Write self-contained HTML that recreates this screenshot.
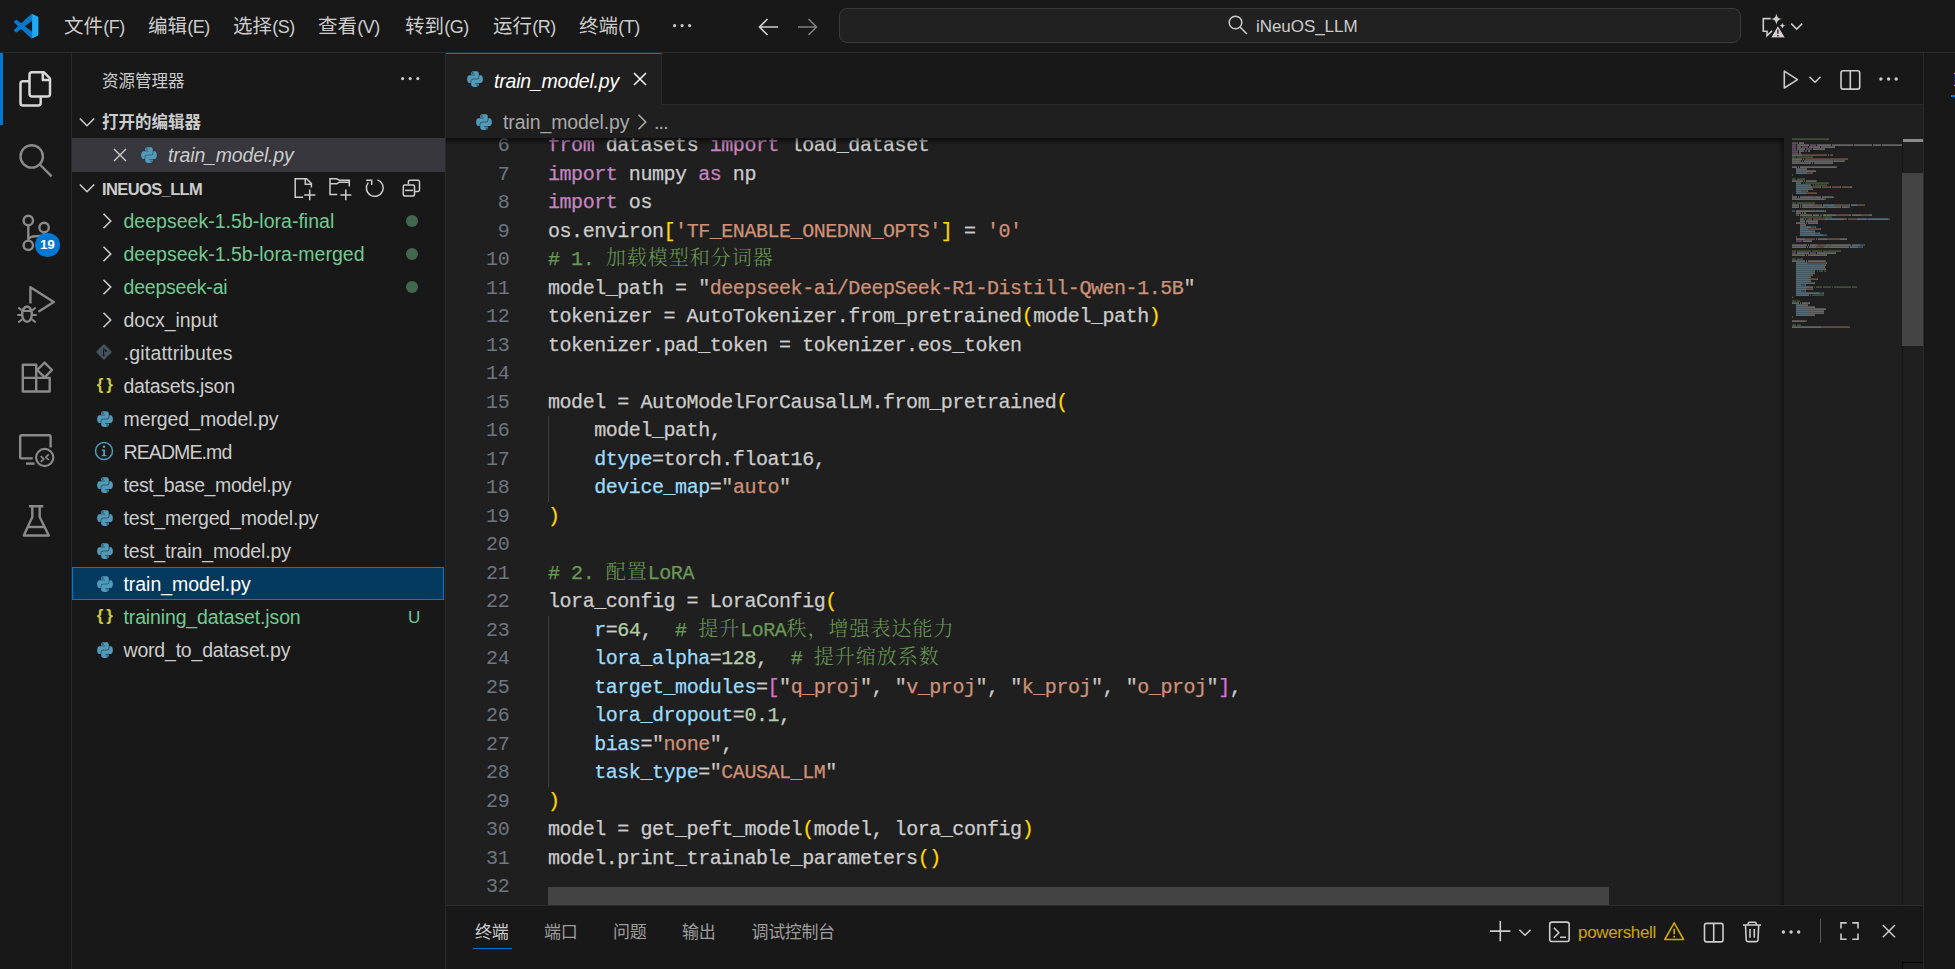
<!DOCTYPE html>
<html lang="zh-CN">
<head>
<meta charset="utf-8">
<title>train_model.py - iNeuOS_LLM - Visual Studio Code</title>
<style>
*{box-sizing:border-box;margin:0;padding:0}
html,body{width:1955px;height:969px;overflow:hidden;background:#181818}
body{position:relative;font-family:"Liberation Sans","Noto Sans CJK SC",sans-serif;font-size:19.5px;color:#cccccc}
.abs{position:absolute}
svg{display:block;overflow:visible}
/* ---------- title bar ---------- */
#titlebar{left:0;top:0;width:1955px;height:53px;background:#181818;border-bottom:1px solid #2b2b2b}
.menu{position:absolute;top:0;height:52px;line-height:53px;font-size:19.5px;color:#cccccc;white-space:nowrap}
.ml{font-size:18px;letter-spacing:-.55px;margin-left:.3px}
#cmd{left:839px;top:8px;width:902px;height:35px;border:1px solid #3a3a3a;border-radius:8px;background:#212121}
/* ---------- activity bar ---------- */
#activity{left:0;top:53px;width:72px;height:916px;background:#181818;border-right:1px solid #2b2b2b}
/* ---------- side bar ---------- */
#sidebar{left:72px;top:53px;width:374px;height:916px;background:#181818;border-right:1px solid #2b2b2b}
.row{position:absolute;left:0;width:373px;height:33px;line-height:32px;white-space:nowrap;font-size:19.5px;color:#cccccc}
.row .lbl{position:absolute;top:0}
.g{color:#73c991}
/* ---------- editor ---------- */
#tabs{left:446px;top:53px;width:1477px;height:52px;background:#181818;border-bottom:1px solid #2b2b2b}
#tab{left:0;top:0;width:216px;height:52px;background:#1f1f1f;border-top:1px solid #0078d4;border-right:1px solid #2b2b2b}
#crumbs{left:446px;top:105px;width:1477px;height:33px;background:#1f1f1f}
#editor{left:446px;top:138px;width:1477px;height:767px;background:#1f1f1f;overflow:hidden}
.ln{position:absolute;left:0;width:63.2px;text-align:right;height:28.5px;line-height:28.5px;color:#6e7681;font-family:"Liberation Mono",monospace;font-size:20px;letter-spacing:-0.45px;white-space:pre}
.cl{position:absolute;left:102px;height:28.5px;line-height:28.5px;color:#cccccc;font-family:"Liberation Mono","Noto Serif CJK SC",monospace;font-size:20px;letter-spacing:-0.45px;white-space:pre;-webkit-text-stroke:.25px}
.q{color:#cdc3bd}.k{color:#c586c0}.s{color:#ce9178}.c{color:#6a9955}.v{color:#9cdcfe}.n{color:#b5cea8}.b1{color:#ffd700}.b2{color:#da70d6}
.cj{letter-spacing:1px;font-size:20px;font-weight:300;-webkit-text-stroke:0}
/* ---------- panel ---------- */
#panel{left:446px;top:905px;width:1477px;height:64px;background:#181818;border-top:1px solid #2b2b2b}
.ptab{position:absolute;top:0;height:52px;line-height:54px;font-size:17px;letter-spacing:-.35px;color:#9d9d9d;white-space:nowrap}
/* ---------- aux bar ---------- */
#aux{left:1923px;top:53px;width:32px;height:916px;background:#181818;border-left:1px solid #2b2b2b}

</style>
</head>
<body>
<div id="titlebar" class="abs">
<svg class="abs" style="left:14px;top:14px" width="24.3" height="24.3" viewBox="0 0 100 100">
<path d="M96.5 10.8L75.9.9a6.2 6.2 0 0 0-7.1 1.2L29.4 38 12.2 25a4.2 4.2 0 0 0-5.3.2L1.4 30.3a4.2 4.2 0 0 0 0 6.2L16.3 50 1.4 63.6a4.2 4.2 0 0 0 0 6.2l5.5 5a4.2 4.2 0 0 0 5.3.200L29.4 62l39.4 36a6.2 6.2 0 0 0 7.1 1.2l20.6-9.9a6.2 6.2 0 0 0 3.5-5.6V16.4a6.2 6.2 0 0 0-3.5-5.6zM75 72.7L45.1 50 75 27.3z" fill="#0877cb"/>
<path d="M75.9.9L96.5 10.8A6.2 6.2 0 0 1 100 16.4v67.3a6.2 6.2 0 0 1-3.5 5.6l-20.6 9.9a6.2 6.2 0 0 1-6.1-.4c2.3 1.4 5.2-.3 5.2-3V4.3c0-2.7-2.9-4.4-5.2-3a6.2 6.2 0 0 1 6.1-.4z" fill="#23a9f2"/>
</svg>
<div class="menu" style="left:64px">文件<span class="ml">(F)</span></div>
<div class="menu" style="left:148px">编辑<span class="ml">(E)</span></div>
<div class="menu" style="left:233px">选择<span class="ml">(S)</span></div>
<div class="menu" style="left:318px">查看<span class="ml">(V)</span></div>
<div class="menu" style="left:405px">转到<span class="ml">(G)</span></div>
<div class="menu" style="left:493px">运行<span class="ml">(R)</span></div>
<div class="menu" style="left:579px">终端<span class="ml">(T)</span></div>
<svg class="abs" style="left:672px;top:23.4px" width="20.2" height="5.2"><circle cx="2.6" cy="2.6" r="1.6" fill="#cccccc"/><circle cx="10.1" cy="2.6" r="1.6" fill="#cccccc"/><circle cx="17.6" cy="2.6" r="1.6" fill="#cccccc"/></svg>
<svg class="abs" style="left:757px;top:16px" width="64" height="22" viewBox="0 0 64 22" fill="none" stroke-width="1.6">
<path d="M10.5 3l-8 8 8 8M2.5 11h18.5" stroke="#cccccc"/><path d="M51.5 3l8 8-8 8M59.5 11h-18.5" stroke="#808080"/></svg>
<div id="cmd" class="abs"></div>
<svg class="abs" style="left:1227px;top:14px" width="22" height="22" viewBox="0 0 22 22" fill="none" stroke="#cccccc" stroke-width="1.5"><circle cx="8.5" cy="8.5" r="6.3"/><path d="M13 13l7 7"/></svg>
<div class="abs" style="left:1256px;top:0;height:52px;line-height:53px;font-size:17px;color:#cccccc;letter-spacing:-0.056px;white-space:nowrap">iNeuOS_LLM</div>
<svg class="abs" style="left:1750px;top:0" width="70" height="52" viewBox="1750 0 70 52" fill="none" stroke="#cccccc" stroke-width="1.6">
<path d="M1770.7 18.6H1763.3V31.2H1767V35.6L1772 30.8"/>
<path d="M1776.4 13.5c.7 3.9 1.8 5 5.8 5.6-4 .6-5.1 1.7-5.8 5.6-.7-3.9-1.8-5-5.8-5.6 4-.6 5.1-1.7 5.8-5.6z" fill="#cccccc" stroke="none"/>
<path d="M1782.4 22.6c.4 2.1 1 2.7 3.1 3.1-2.1.4-2.7 1-3.1 3.1-.4-2.1-1-2.7-3.1-3.1 2.1-.4 2.7-1 3.1-3.1z" fill="#cccccc" stroke="none"/>
<path d="M1777.9 25.4L1785.5 37.9H1770.5z" fill="#d0d0d0" stroke="#181818" stroke-width="1"/>
<path d="M1777.9 29.5v4.3M1777.9 35v1.5" stroke="#5a1d1d" stroke-width="1.5"/>
<path d="M1791.2 23.6l5.5 5.5 5.5-5.5" stroke-width="1.5"/></svg>
</div>
<div id="activity" class="abs">
<div class="abs" style="left:0;top:0;width:3px;height:72px;background:#0078d4"></div>
<svg class="abs" style="left:0;top:0" width="72" height="520" viewBox="0 0 72 520" fill="none" stroke-width="2.4" stroke-linejoin="round">
<g stroke="#d7d7d7" stroke-width="2.5"><path d="M32 19.3H44L50 25.5V41.1a2.5 2.5 0 0 1-2.5 2.5H32a2.5 2.5 0 0 1-2.5-2.5V21.8a2.5 2.5 0 0 1 2.5-2.5z"/><path d="M42.8 19.3V27H50"/><path d="M29.5 28.3H23a2.5 2.5 0 0 0-2.5 2.5V50a2.5 2.5 0 0 0 2.5 2.5H38.2a2.5 2.5 0 0 0 2.5-2.5V43.6"/></g>
<g stroke="#8a8a8a">
<circle cx="31.7" cy="103.4" r="11.2"/><path d="M39.8 111.5L51.6 123.3"/>
<circle cx="28.3" cy="167.5" r="4.7"/><circle cx="44.1" cy="174.5" r="4.7"/><circle cx="28.3" cy="192.3" r="4.7"/><path d="M28.3 172.2V187.6M44.1 179.2c0 3.8-3 4-8 4-5 0-7.8 1-7.8 4.4"/>
<path d="M30.4 250.6V234.2L53.8 249 38.4 258.8"/><ellipse cx="27" cy="261.2" rx="4.8" ry="7.7"/><path d="M22.3 258h9.4M17.3 262h4.3M32.4 262h4.3M18.3 254.5l3.6 3M35.7 254.5l-3.6 3M18.3 269.5l3.9-3.3M35.7 269.5l-3.9-3.3" stroke-width="2"/>
<path d="M22.8 311.7H36.2V324.9H49.7V338.5H22.8z"/><path d="M22.8 324.9H36.2V338.5"/><path d="M44.6 309.6L52 317 44.6 324.4 37.2 317z"/>
<path d="M32.8 405.4H21.7a1.5 1.5 0 0 1-1.5-1.5V383.8a1.5 1.5 0 0 1 1.5-1.5H49.1a1.5 1.5 0 0 1 1.5 1.5V394.6"/><path d="M26 410.6h8.6"/><circle cx="44.7" cy="404.5" r="8.6" stroke-width="2.2"/><path d="M40.7 403.2l3.1 2.8-3.1 2.8M48.8 401.4l-3 2.8 3 2.8" stroke-width="1.7"/>
<path d="M29 453.3H43.3M32.3 453.3V464L23.8 482.5H48.8L39.7 464V453.3"/><path d="M28 474H44.5"/>
</g></svg>
<div class="abs" style="left:35px;top:179.7px;width:24.6px;height:24.6px;border-radius:50%;background:#0078d4;color:#fff;font:bold 13.5px/24.6px 'Liberation Sans',sans-serif;text-align:center;letter-spacing:-.3px">19</div>
</div>
<div id="sidebar" class="abs">
<div class="abs" style="left:30px;top:0px;height:52px;line-height:56px;font-size:16.5px;color:#cccccc;white-space:nowrap">资源管理器</div>
<svg class="abs" style="left:327.7px;top:22.9px" width="20.4" height="5.2"><circle cx="2.6" cy="2.6" r="1.6" fill="#cccccc"/><circle cx="10.2" cy="2.6" r="1.6" fill="#cccccc"/><circle cx="17.8" cy="2.6" r="1.6" fill="#cccccc"/></svg>
<svg class="abs" style="left:7px;top:61px" width="16" height="16" viewBox="0 0 16 16"><path d="M.800 4.5l7.2 7.2 7.2-7.2" fill="none" stroke="#cccccc" stroke-width="1.6"/></svg>
<div class="abs" style="left:30px;top:52px;height:33px;line-height:35px;font-size:16.5px;font-weight:bold;color:#cccccc;white-space:nowrap">打开的编辑器</div>
<div class="abs" style="left:0;top:85px;width:373px;height:34px;background:#37373d"></div>
<svg class="abs" style="left:41px;top:95px" width="14" height="14" viewBox="0 0 14 14"><path d="M1 1l12 12M13 1L1 13" fill="none" stroke="#cccccc" stroke-width="1.4"/></svg>
<svg class="abs" style="left:69px;top:94px" width="16" height="16" viewBox="-1 0 113 110.5"><path fill="#519aba" fill-rule="evenodd" d="M54.9 0c-4.6 0-9 .4-12.8 1.1C30.8 3.1 28.7 7.3 28.7 15v10.2h26.8v3.4H18.6c-7.8 0-14.6 4.7-16.7 13.6-2.5 10.2-2.6 16.6 0 27.2 1.9 7.9 6.4 13.6 14.2 13.6h9.2V70.7c0-8.8 7.6-16.6 16.7-16.6h26.8c7.5 0 13.4-6.1 13.4-13.6V15c0-7.3-6.1-12.7-13.4-13.9C64.2.3 59.4 0 54.9 0zM40.4 8.2c2.8 0 5 2.3 5 5.1 0 2.8-2.3 5.1-5 5.1-2.8 0-5-2.3-5-5.1 0-2.8 2.2-5.1 5-5.1zM85.6 28.7v11.9c0 9.2-7.8 17-16.7 17H42.1c-7.3 0-13.4 6.3-13.4 13.6v25.5c0 7.3 6.3 11.5 13.4 13.6 8.5 2.5 16.6 2.9 26.8 0 6.7-2 13.4-5.9 13.4-13.6V86.5H55.5v-3.4h40.2c7.8 0 10.7-5.4 13.4-13.6 2.8-8.4 2.7-16.5 0-27.2-1.9-7.7-5.6-13.6-13.4-13.6H85.6zM70.5 93.3c2.8 0 5 2.3 5 5.1 0 2.8-2.3 5.1-5 5.1-2.8 0-5-2.3-5-5.1 0-2.8 2.3-5.1 5-5.1z"/></svg>
<div class="abs lbl-i" style="left:96px;top:85px;height:33px;line-height:35px;font-style:italic;letter-spacing:-0.165px;white-space:nowrap">train_model.py</div>
<svg class="abs" style="left:7px;top:127px" width="16" height="16" viewBox="0 0 16 16"><path d="M.800 4.5l7.2 7.2 7.2-7.2" fill="none" stroke="#cccccc" stroke-width="1.6"/></svg>
<div class="abs" style="left:30px;top:118px;height:33px;line-height:36px;font-size:16.5px;font-weight:bold;color:#cccccc;letter-spacing:-0.614px;white-space:nowrap">INEUOS_LLM</div>
<svg class="abs" style="left:0;top:0" width="373" height="200" viewBox="72 53 373 200" fill="none" stroke="#cccccc" stroke-width="1.5">
<path d="M303.2 197.3H295.2V178.8H306.6L311.4 183.6V187.5"/><path d="M305.3 178.8V184.2H311.4"/><path d="M309.7 189.6V200.2M304.2 195H315.4"/>
<path d="M337.3 194.6H330V178.8H336.8L339.3 180.3H349.3V186.6"/><path d="M330 183.8H336.8L339.3 182.2H349.3"/><path d="M345.8 189.6V200.2M340.4 195H351.4"/>
<path d="M377.3 179.9A8.4 8.4 0 1 1 368.3 182.6"/><path d="M366.2 180.3H371.7V185"/>
<path d="M408.4 184V181.8a1.5 1.5 0 0 1 1.5-1.5H418a1.5 1.5 0 0 1 1.5 1.5V190a1.5 1.5 0 0 1-1.5 1.5H415"/><rect x="403.3" y="184.9" width="11.2" height="11" rx="1.5"/><path d="M405 190.4H413"/>
</svg>
<svg class="abs" style="left:27px;top:159.5px" width="16" height="16" viewBox="0 0 16 16"><path d="M4.5 .800l7.2 7.2-7.2 7.2" fill="none" stroke="#cccccc" stroke-width="1.6"/></svg>
<div class="abs" style="left:51.5px;top:151px;height:33px;line-height:35px;color:#73c991;letter-spacing:0.021px;white-space:nowrap">deepseek-1.5b-lora-final</div>
<div class="abs" style="left:334.4px;top:161.8px;width:12px;height:12px;border-radius:50%;background:#73c991;opacity:.45"></div>
<svg class="abs" style="left:27px;top:192.5px" width="16" height="16" viewBox="0 0 16 16"><path d="M4.5 .800l7.2 7.2-7.2 7.2" fill="none" stroke="#cccccc" stroke-width="1.6"/></svg>
<div class="abs" style="left:51.5px;top:184px;height:33px;line-height:35px;color:#73c991;letter-spacing:0.014px;white-space:nowrap">deepseek-1.5b-lora-merged</div>
<div class="abs" style="left:334.4px;top:194.8px;width:12px;height:12px;border-radius:50%;background:#73c991;opacity:.45"></div>
<svg class="abs" style="left:27px;top:225.5px" width="16" height="16" viewBox="0 0 16 16"><path d="M4.5 .800l7.2 7.2-7.2 7.2" fill="none" stroke="#cccccc" stroke-width="1.6"/></svg>
<div class="abs" style="left:51.5px;top:217px;height:33px;line-height:35px;color:#73c991;letter-spacing:-0.214px;white-space:nowrap">deepseek-ai</div>
<div class="abs" style="left:334.4px;top:227.8px;width:12px;height:12px;border-radius:50%;background:#73c991;opacity:.45"></div>
<svg class="abs" style="left:27px;top:258.5px" width="16" height="16" viewBox="0 0 16 16"><path d="M4.5 .800l7.2 7.2-7.2 7.2" fill="none" stroke="#cccccc" stroke-width="1.6"/></svg>
<div class="abs" style="left:51.5px;top:250px;height:33px;line-height:35px;color:#cccccc;letter-spacing:-0.013px;white-space:nowrap">docx_input</div>
<svg class="abs" style="left:23px;top:290px" width="18" height="18" viewBox="0 0 18 18"><rect x="3.2" y="3.2" width="11.6" height="11.6" rx="1.2" transform="rotate(45 9 9)" fill="#41535b"/><path d="M8.2 5.2l2.6 2.6M8.6 7v5.2" stroke="#181818" stroke-width="1.1" fill="none"/><circle cx="8.6" cy="12.2" r="1" fill="#181818"/><circle cx="10.9" cy="8" r="1" fill="#181818"/></svg>
<div class="abs" style="left:51.5px;top:283px;height:33px;line-height:35px;color:#cccccc;letter-spacing:0.219px;white-space:nowrap">.gitattributes</div>
<div class="abs" style="left:24.7px;top:321.5px;width:18px;height:20px;line-height:20px;font:bold 17px/20px 'Liberation Sans',sans-serif;color:#cbcb41;letter-spacing:3px;white-space:nowrap">{}</div>
<div class="abs" style="left:51.5px;top:316px;height:33px;line-height:35px;color:#cccccc;letter-spacing:-0.285px;white-space:nowrap">datasets.json</div>
<svg class="abs" style="left:24.6px;top:357.5px" width="16" height="16" viewBox="-1 0 113 110.5"><path fill="#519aba" fill-rule="evenodd" d="M54.9 0c-4.6 0-9 .4-12.8 1.1C30.8 3.1 28.7 7.3 28.7 15v10.2h26.8v3.4H18.6c-7.8 0-14.6 4.7-16.7 13.6-2.5 10.2-2.6 16.6 0 27.2 1.9 7.9 6.4 13.6 14.2 13.6h9.2V70.7c0-8.8 7.6-16.6 16.7-16.6h26.8c7.5 0 13.4-6.1 13.4-13.6V15c0-7.3-6.1-12.7-13.4-13.9C64.2.3 59.4 0 54.9 0zM40.4 8.2c2.8 0 5 2.3 5 5.1 0 2.8-2.3 5.1-5 5.1-2.8 0-5-2.3-5-5.1 0-2.8 2.2-5.1 5-5.1zM85.6 28.7v11.9c0 9.2-7.8 17-16.7 17H42.1c-7.3 0-13.4 6.3-13.4 13.6v25.5c0 7.3 6.3 11.5 13.4 13.6 8.5 2.5 16.6 2.9 26.8 0 6.7-2 13.4-5.9 13.4-13.6V86.5H55.5v-3.4h40.2c7.8 0 10.7-5.4 13.4-13.6 2.8-8.4 2.7-16.5 0-27.2-1.9-7.7-5.6-13.6-13.4-13.6H85.6zM70.5 93.3c2.8 0 5 2.3 5 5.1 0 2.8-2.3 5.1-5 5.1-2.8 0-5-2.3-5-5.1 0-2.8 2.3-5.1 5-5.1z"/></svg>
<div class="abs" style="left:51.5px;top:349px;height:33px;line-height:35px;color:#cccccc;letter-spacing:-0.08px;white-space:nowrap">merged_model.py</div>
<svg class="abs" style="left:22px;top:388px" width="20" height="20" viewBox="0 0 20 20"><circle cx="10" cy="10" r="8.5" fill="none" stroke="#519aba" stroke-width="1.5"/><circle cx="10" cy="5.8" r="1.3" fill="#519aba"/><path d="M7.8 8.6h3.2v5.4h1.4v1.3H7.7v-1.3h1.5V9.9H7.8z" fill="#519aba"/></svg>
<div class="abs" style="left:51.5px;top:382px;height:33px;line-height:35px;color:#cccccc;letter-spacing:-0.893px;white-space:nowrap">README.md</div>
<svg class="abs" style="left:24.6px;top:423.5px" width="16" height="16" viewBox="-1 0 113 110.5"><path fill="#519aba" fill-rule="evenodd" d="M54.9 0c-4.6 0-9 .4-12.8 1.1C30.8 3.1 28.7 7.3 28.7 15v10.2h26.8v3.4H18.6c-7.8 0-14.6 4.7-16.7 13.6-2.5 10.2-2.6 16.6 0 27.2 1.9 7.9 6.4 13.6 14.2 13.6h9.2V70.7c0-8.8 7.6-16.6 16.7-16.6h26.8c7.5 0 13.4-6.1 13.4-13.6V15c0-7.3-6.1-12.7-13.4-13.9C64.2.3 59.4 0 54.9 0zM40.4 8.2c2.8 0 5 2.3 5 5.1 0 2.8-2.3 5.1-5 5.1-2.8 0-5-2.3-5-5.1 0-2.8 2.2-5.1 5-5.1zM85.6 28.7v11.9c0 9.2-7.8 17-16.7 17H42.1c-7.3 0-13.4 6.3-13.4 13.6v25.5c0 7.3 6.3 11.5 13.4 13.6 8.5 2.5 16.6 2.9 26.8 0 6.7-2 13.4-5.9 13.4-13.6V86.5H55.5v-3.4h40.2c7.8 0 10.7-5.4 13.4-13.6 2.8-8.4 2.7-16.5 0-27.2-1.9-7.7-5.6-13.6-13.4-13.6H85.6zM70.5 93.3c2.8 0 5 2.3 5 5.1 0 2.8-2.3 5.1-5 5.1-2.8 0-5-2.3-5-5.1 0-2.8 2.3-5.1 5-5.1z"/></svg>
<div class="abs" style="left:51.5px;top:415px;height:33px;line-height:35px;color:#cccccc;letter-spacing:-0.385px;white-space:nowrap">test_base_model.py</div>
<svg class="abs" style="left:24.6px;top:456.5px" width="16" height="16" viewBox="-1 0 113 110.5"><path fill="#519aba" fill-rule="evenodd" d="M54.9 0c-4.6 0-9 .4-12.8 1.1C30.8 3.1 28.7 7.3 28.7 15v10.2h26.8v3.4H18.6c-7.8 0-14.6 4.7-16.7 13.6-2.5 10.2-2.6 16.6 0 27.2 1.9 7.9 6.4 13.6 14.2 13.6h9.2V70.7c0-8.8 7.6-16.6 16.7-16.6h26.8c7.5 0 13.4-6.1 13.4-13.6V15c0-7.3-6.1-12.7-13.4-13.9C64.2.3 59.4 0 54.9 0zM40.4 8.2c2.8 0 5 2.3 5 5.1 0 2.8-2.3 5.1-5 5.1-2.8 0-5-2.3-5-5.1 0-2.8 2.2-5.1 5-5.1zM85.6 28.7v11.9c0 9.2-7.8 17-16.7 17H42.1c-7.3 0-13.4 6.3-13.4 13.6v25.5c0 7.3 6.3 11.5 13.4 13.6 8.5 2.5 16.6 2.9 26.8 0 6.7-2 13.4-5.9 13.4-13.6V86.5H55.5v-3.4h40.2c7.8 0 10.7-5.4 13.4-13.6 2.8-8.4 2.7-16.5 0-27.2-1.9-7.7-5.6-13.6-13.4-13.6H85.6zM70.5 93.3c2.8 0 5 2.3 5 5.1 0 2.8-2.3 5.1-5 5.1-2.8 0-5-2.3-5-5.1 0-2.8 2.3-5.1 5-5.1z"/></svg>
<div class="abs" style="left:51.5px;top:448px;height:33px;line-height:35px;color:#cccccc;letter-spacing:-0.174px;white-space:nowrap">test_merged_model.py</div>
<svg class="abs" style="left:24.6px;top:489.5px" width="16" height="16" viewBox="-1 0 113 110.5"><path fill="#519aba" fill-rule="evenodd" d="M54.9 0c-4.6 0-9 .4-12.8 1.1C30.8 3.1 28.7 7.3 28.7 15v10.2h26.8v3.4H18.6c-7.8 0-14.6 4.7-16.7 13.6-2.5 10.2-2.6 16.6 0 27.2 1.9 7.9 6.4 13.6 14.2 13.6h9.2V70.7c0-8.8 7.6-16.6 16.7-16.6h26.8c7.5 0 13.4-6.1 13.4-13.6V15c0-7.3-6.1-12.7-13.4-13.9C64.2.3 59.4 0 54.9 0zM40.4 8.2c2.8 0 5 2.3 5 5.1 0 2.8-2.3 5.1-5 5.1-2.8 0-5-2.3-5-5.1 0-2.8 2.2-5.1 5-5.1zM85.6 28.7v11.9c0 9.2-7.8 17-16.7 17H42.1c-7.3 0-13.4 6.3-13.4 13.6v25.5c0 7.3 6.3 11.5 13.4 13.6 8.5 2.5 16.6 2.9 26.8 0 6.7-2 13.4-5.9 13.4-13.6V86.5H55.5v-3.4h40.2c7.8 0 10.7-5.4 13.4-13.6 2.8-8.4 2.7-16.5 0-27.2-1.9-7.7-5.6-13.6-13.4-13.6H85.6zM70.5 93.3c2.8 0 5 2.3 5 5.1 0 2.8-2.3 5.1-5 5.1-2.8 0-5-2.3-5-5.1 0-2.8 2.3-5.1 5-5.1z"/></svg>
<div class="abs" style="left:51.5px;top:481px;height:33px;line-height:35px;color:#cccccc;letter-spacing:-0.152px;white-space:nowrap">test_train_model.py</div>
<div class="abs" style="left:0;top:514px;width:372px;height:33px;background:#04395e;border:1px solid #0078d4"></div>
<svg class="abs" style="left:24.6px;top:522.5px" width="16" height="16" viewBox="-1 0 113 110.5"><path fill="#519aba" fill-rule="evenodd" d="M54.9 0c-4.6 0-9 .4-12.8 1.1C30.8 3.1 28.7 7.3 28.7 15v10.2h26.8v3.4H18.6c-7.8 0-14.6 4.7-16.7 13.6-2.5 10.2-2.6 16.6 0 27.2 1.9 7.9 6.4 13.6 14.2 13.6h9.2V70.7c0-8.8 7.6-16.6 16.7-16.6h26.8c7.5 0 13.4-6.1 13.4-13.6V15c0-7.3-6.1-12.7-13.4-13.9C64.2.3 59.4 0 54.9 0zM40.4 8.2c2.8 0 5 2.3 5 5.1 0 2.8-2.3 5.1-5 5.1-2.8 0-5-2.3-5-5.1 0-2.8 2.2-5.1 5-5.1zM85.6 28.7v11.9c0 9.2-7.8 17-16.7 17H42.1c-7.3 0-13.4 6.3-13.4 13.6v25.5c0 7.3 6.3 11.5 13.4 13.6 8.5 2.5 16.6 2.9 26.8 0 6.7-2 13.4-5.9 13.4-13.6V86.5H55.5v-3.4h40.2c7.8 0 10.7-5.4 13.4-13.6 2.8-8.4 2.7-16.5 0-27.2-1.9-7.7-5.6-13.6-13.4-13.6H85.6zM70.5 93.3c2.8 0 5 2.3 5 5.1 0 2.8-2.3 5.1-5 5.1-2.8 0-5-2.3-5-5.1 0-2.8 2.3-5.1 5-5.1z"/></svg>
<div class="abs" style="left:51.5px;top:514px;height:33px;line-height:35px;color:#ffffff;letter-spacing:-0.05px;white-space:nowrap">train_model.py</div>
<div class="abs" style="left:24.7px;top:552.5px;width:18px;height:20px;line-height:20px;font:bold 17px/20px 'Liberation Sans',sans-serif;color:#cbcb41;letter-spacing:3px;white-space:nowrap">{}</div>
<div class="abs" style="left:51.5px;top:547px;height:33px;line-height:35px;color:#73c991;letter-spacing:-0.137px;white-space:nowrap">training_dataset.json</div>
<div class="abs" style="left:336px;top:547px;height:33px;line-height:36px;font-size:17px;color:#73c991">U</div>
<svg class="abs" style="left:24.6px;top:588.5px" width="16" height="16" viewBox="-1 0 113 110.5"><path fill="#519aba" fill-rule="evenodd" d="M54.9 0c-4.6 0-9 .4-12.8 1.1C30.8 3.1 28.7 7.3 28.7 15v10.2h26.8v3.4H18.6c-7.8 0-14.6 4.7-16.7 13.6-2.5 10.2-2.6 16.6 0 27.2 1.9 7.9 6.4 13.6 14.2 13.6h9.2V70.7c0-8.8 7.6-16.6 16.7-16.6h26.8c7.5 0 13.4-6.1 13.4-13.6V15c0-7.3-6.1-12.7-13.4-13.9C64.2.3 59.4 0 54.9 0zM40.4 8.2c2.8 0 5 2.3 5 5.1 0 2.8-2.3 5.1-5 5.1-2.8 0-5-2.3-5-5.1 0-2.8 2.2-5.1 5-5.1zM85.6 28.7v11.9c0 9.2-7.8 17-16.7 17H42.1c-7.3 0-13.4 6.3-13.4 13.6v25.5c0 7.3 6.3 11.5 13.4 13.6 8.5 2.5 16.6 2.9 26.8 0 6.7-2 13.4-5.9 13.4-13.6V86.5H55.5v-3.4h40.2c7.8 0 10.7-5.4 13.4-13.6 2.8-8.4 2.7-16.5 0-27.2-1.9-7.7-5.6-13.6-13.4-13.6H85.6zM70.5 93.3c2.8 0 5 2.3 5 5.1 0 2.8-2.3 5.1-5 5.1-2.8 0-5-2.3-5-5.1 0-2.8 2.3-5.1 5-5.1z"/></svg>
<div class="abs" style="left:51.5px;top:580px;height:33px;line-height:35px;color:#cccccc;letter-spacing:-0.195px;white-space:nowrap">word_to_dataset.py</div>
</div>
<div id="tabs" class="abs">
<div id="tab" class="abs">
<svg class="abs" style="left:21px;top:17px" width="16" height="16" viewBox="-1 0 113 110.5"><path fill="#519aba" fill-rule="evenodd" d="M54.9 0c-4.6 0-9 .4-12.8 1.1C30.8 3.1 28.7 7.3 28.7 15v10.2h26.8v3.4H18.6c-7.8 0-14.6 4.7-16.7 13.6-2.5 10.2-2.6 16.6 0 27.2 1.9 7.9 6.4 13.6 14.2 13.6h9.2V70.7c0-8.8 7.6-16.6 16.7-16.6h26.8c7.5 0 13.4-6.1 13.4-13.6V15c0-7.3-6.1-12.7-13.4-13.9C64.2.3 59.4 0 54.9 0zM40.4 8.2c2.8 0 5 2.3 5 5.1 0 2.8-2.3 5.1-5 5.1-2.8 0-5-2.3-5-5.1 0-2.8 2.2-5.1 5-5.1zM85.6 28.7v11.9c0 9.2-7.8 17-16.7 17H42.1c-7.3 0-13.4 6.3-13.4 13.6v25.5c0 7.3 6.3 11.5 13.4 13.6 8.5 2.5 16.6 2.9 26.8 0 6.7-2 13.4-5.9 13.4-13.6V86.5H55.5v-3.4h40.2c7.8 0 10.7-5.4 13.4-13.6 2.8-8.4 2.7-16.5 0-27.2-1.9-7.7-5.6-13.6-13.4-13.6H85.6zM70.5 93.3c2.8 0 5 2.3 5 5.1 0 2.8-2.3 5.1-5 5.1-2.8 0-5-2.3-5-5.1 0-2.8 2.3-5.1 5-5.1z"/></svg>
<div class="abs" style="left:48px;top:0;height:52px;line-height:54px;font-style:italic;color:#ffffff;letter-spacing:-0.208px;white-space:nowrap">train_model.py</div>
<svg class="abs" style="left:187px;top:18px" width="14" height="14" viewBox="0 0 14 14"><path d="M1 1l12 12M13 1L1 13" fill="none" stroke="#ffffff" stroke-width="1.5"/></svg>
</div>
<svg class="abs" style="left:1324px;top:0" width="150" height="52" viewBox="1770 53 150 52" fill="none" stroke="#cccccc" stroke-width="1.6" stroke-linejoin="round">
<path d="M1784.3 71.2V88L1797.5 79.6z"/><path d="M1809.5 76.7l5.5 5.5 5.5-5.5" stroke-width="1.5"/>
<rect x="1841" y="70.8" width="18.7" height="18.3" rx="2.2"/><path d="M1850.3 70.8V89.1"/>
<circle cx="1880.9" cy="79" r="1.7" fill="#cccccc" stroke="none"/><circle cx="1888.6" cy="79" r="1.7" fill="#cccccc" stroke="none"/><circle cx="1896.2" cy="79" r="1.7" fill="#cccccc" stroke="none"/></svg>
</div>
<div id="crumbs" class="abs">
<svg class="abs" style="left:30px;top:9px" width="16" height="16" viewBox="-1 0 113 110.5"><path fill="#519aba" fill-rule="evenodd" d="M54.9 0c-4.6 0-9 .4-12.8 1.1C30.8 3.1 28.7 7.3 28.7 15v10.2h26.8v3.4H18.6c-7.8 0-14.6 4.7-16.7 13.6-2.5 10.2-2.6 16.6 0 27.2 1.9 7.9 6.4 13.6 14.2 13.6h9.2V70.7c0-8.8 7.6-16.6 16.7-16.6h26.8c7.5 0 13.4-6.1 13.4-13.6V15c0-7.3-6.1-12.7-13.4-13.9C64.2.3 59.4 0 54.9 0zM40.4 8.2c2.8 0 5 2.3 5 5.1 0 2.8-2.3 5.1-5 5.1-2.8 0-5-2.3-5-5.1 0-2.8 2.2-5.1 5-5.1zM85.6 28.7v11.9c0 9.2-7.8 17-16.7 17H42.1c-7.3 0-13.4 6.3-13.4 13.6v25.5c0 7.3 6.3 11.5 13.4 13.6 8.5 2.5 16.6 2.9 26.8 0 6.7-2 13.4-5.9 13.4-13.6V86.5H55.5v-3.4h40.2c7.8 0 10.7-5.4 13.4-13.6 2.8-8.4 2.7-16.5 0-27.2-1.9-7.7-5.6-13.6-13.4-13.6H85.6zM70.5 93.3c2.8 0 5 2.3 5 5.1 0 2.8-2.3 5.1-5 5.1-2.8 0-5-2.3-5-5.1 0-2.8 2.3-5.1 5-5.1z"/></svg>
<div class="abs" style="left:57px;top:0;height:33px;line-height:35px;color:#a9a9a9;letter-spacing:-0.1px;white-space:nowrap">train_model.py</div>
<svg class="abs" style="left:188px;top:9px" width="16" height="16" viewBox="0 0 16 16"><path d="M4.5 .800l7.2 7.2-7.2 7.2" fill="none" stroke="#a9a9a9" stroke-width="1.6"/></svg>
<div class="abs" style="left:208px;top:0;height:33px;line-height:35px;color:#a9a9a9;letter-spacing:-.8px;white-space:nowrap">...</div>
</div>
<div id="editor" class="abs">
<div class="ln" style="top:-5.55px">6</div><div class="cl" style="top:-5.55px"><span class="k">from</span> datasets <span class="k">import</span> load_dataset</div>
<div class="ln" style="top:22.95px">7</div><div class="cl" style="top:22.95px"><span class="k">import</span> numpy <span class="k">as</span> np</div>
<div class="ln" style="top:51.45px">8</div><div class="cl" style="top:51.45px"><span class="k">import</span> os</div>
<div class="ln" style="top:79.95px">9</div><div class="cl" style="top:79.95px">os.environ<span class="b1">[</span><span class="s">'TF_ENABLE_ONEDNN_OPTS'</span><span class="b1">]</span> = <span class="s">'0'</span></div>
<div class="ln" style="top:108.45px">10</div><div class="cl" style="top:108.45px"><span class="c"># 1. <span class="cj">加载模型和分词器</span></span></div>
<div class="ln" style="top:136.95px">11</div><div class="cl" style="top:136.95px">model_path = <span class="q">"</span><span class="s">deepseek-ai/DeepSeek-R1-Distill-Qwen-1.5B</span><span class="q">"</span></div>
<div class="ln" style="top:165.45px">12</div><div class="cl" style="top:165.45px">tokenizer = AutoTokenizer.from_pretrained<span class="b1">(</span>model_path<span class="b1">)</span></div>
<div class="ln" style="top:193.95px">13</div><div class="cl" style="top:193.95px">tokenizer.pad_token = tokenizer.eos_token</div>
<div class="ln" style="top:222.45px">14</div><div class="cl" style="top:222.45px"></div>
<div class="ln" style="top:250.95px">15</div><div class="cl" style="top:250.95px">model = AutoModelForCausalLM.from_pretrained<span class="b1">(</span></div>
<div class="ln" style="top:279.45px">16</div><div class="cl" style="top:279.45px">    model_path,</div>
<div class="ln" style="top:307.95px">17</div><div class="cl" style="top:307.95px">    <span class="v">dtype</span>=torch.float16,</div>
<div class="ln" style="top:336.45px">18</div><div class="cl" style="top:336.45px">    <span class="v">device_map</span>=<span class="q">"</span><span class="s">auto</span><span class="q">"</span></div>
<div class="ln" style="top:364.95px">19</div><div class="cl" style="top:364.95px"><span class="b1">)</span></div>
<div class="ln" style="top:393.45px">20</div><div class="cl" style="top:393.45px"></div>
<div class="ln" style="top:421.95px">21</div><div class="cl" style="top:421.95px"><span class="c"># 2. <span class="cj">配置</span>LoRA</span></div>
<div class="ln" style="top:450.45px">22</div><div class="cl" style="top:450.45px">lora_config = LoraConfig<span class="b1">(</span></div>
<div class="ln" style="top:478.95px">23</div><div class="cl" style="top:478.95px">    <span class="v">r</span>=<span class="n">64</span>,  <span class="c"># <span class="cj">提升</span>LoRA<span class="cj">秩，增强表达能力</span></span></div>
<div class="ln" style="top:507.45px">24</div><div class="cl" style="top:507.45px">    <span class="v">lora_alpha</span>=<span class="n">128</span>,  <span class="c"># <span class="cj">提升缩放系数</span></span></div>
<div class="ln" style="top:535.95px">25</div><div class="cl" style="top:535.95px">    <span class="v">target_modules</span>=<span class="b2">[</span><span class="q">"</span><span class="s">q_proj</span><span class="q">"</span>, <span class="q">"</span><span class="s">v_proj</span><span class="q">"</span>, <span class="q">"</span><span class="s">k_proj</span><span class="q">"</span>, <span class="q">"</span><span class="s">o_proj</span><span class="q">"</span><span class="b2">]</span>,</div>
<div class="ln" style="top:564.45px">26</div><div class="cl" style="top:564.45px">    <span class="v">lora_dropout</span>=<span class="n">0.1</span>,</div>
<div class="ln" style="top:592.95px">27</div><div class="cl" style="top:592.95px">    <span class="v">bias</span>=<span class="q">"</span><span class="s">none</span><span class="q">"</span>,</div>
<div class="ln" style="top:621.45px">28</div><div class="cl" style="top:621.45px">    <span class="v">task_type</span>=<span class="q">"</span><span class="s">CAUSAL_LM</span><span class="q">"</span></div>
<div class="ln" style="top:649.95px">29</div><div class="cl" style="top:649.95px"><span class="b1">)</span></div>
<div class="ln" style="top:678.45px">30</div><div class="cl" style="top:678.45px">model = get_peft_model<span class="b1">(</span>model, lora_config<span class="b1">)</span></div>
<div class="ln" style="top:706.95px">31</div><div class="cl" style="top:706.95px">model.print_trainable_parameters<span class="b1">()</span></div>
<div class="ln" style="top:735.45px">32</div><div class="cl" style="top:735.45px"></div>
<div class="ln" style="top:763.95px">33</div><div class="cl" style="top:763.95px"><span class="c"># 3. <span class="cj">加载并预处理数据集</span></span></div>
<div class="abs" style="left:102px;top:278.25px;width:1px;height:85.5px;background:#404040"></div>
<div class="abs" style="left:102px;top:477.75px;width:1px;height:171px;background:#404040"></div>
<div class="abs" style="left:1332px;top:0;width:6px;height:767px;background:linear-gradient(to right,rgba(0,0,0,0),rgba(0,0,0,.4))"></div>
<svg class="abs" style="left:1346px;top:0" width="112" height="200" viewBox="0 0 112 200" shape-rendering="crispEdges">
<g opacity=".5" shape-rendering="auto"><rect x="0" y="0.4" width="37" height="1.4" fill="#6a9955"/><rect x="0" y="4.4" width="6" height="1.4" fill="#c586c0"/><rect x="7" y="4.4" width="5" height="1.4" fill="#cccccc"/><rect x="0" y="6.4" width="4" height="1.4" fill="#c586c0"/><rect x="5" y="6.4" width="12" height="1.4" fill="#cccccc"/><rect x="18" y="6.4" width="6" height="1.4" fill="#c586c0"/><rect x="25" y="6.4" width="14" height="1.4" fill="#cccccc"/><rect x="40" y="6.4" width="21" height="1.4" fill="#cccccc"/><rect x="62" y="6.4" width="18" height="1.4" fill="#cccccc"/><rect x="81" y="6.4" width="8" height="1.4" fill="#cccccc"/><rect x="90" y="6.4" width="20" height="1.4" fill="#cccccc"/><rect x="0" y="8.4" width="4" height="1.4" fill="#c586c0"/><rect x="5" y="8.4" width="4" height="1.4" fill="#cccccc"/><rect x="10" y="8.4" width="6" height="1.4" fill="#c586c0"/><rect x="17" y="8.4" width="11" height="1.4" fill="#cccccc"/><rect x="29" y="8.4" width="14" height="1.4" fill="#cccccc"/><rect x="0" y="10.4" width="4" height="1.4" fill="#c586c0"/><rect x="5" y="10.4" width="8" height="1.4" fill="#cccccc"/><rect x="14" y="10.4" width="6" height="1.4" fill="#c586c0"/><rect x="21" y="10.4" width="12" height="1.4" fill="#cccccc"/><rect x="0" y="12.4" width="6" height="1.4" fill="#c586c0"/><rect x="7" y="12.4" width="5" height="1.4" fill="#cccccc"/><rect x="13" y="12.4" width="2" height="1.4" fill="#c586c0"/><rect x="16" y="12.4" width="2" height="1.4" fill="#cccccc"/><rect x="0" y="14.4" width="6" height="1.4" fill="#c586c0"/><rect x="7" y="14.4" width="2" height="1.4" fill="#cccccc"/><rect x="0" y="16.4" width="10" height="1.4" fill="#cccccc"/><rect x="10" y="16.4" width="1" height="1.4" fill="#b8a040"/><rect x="11" y="16.4" width="23" height="1.4" fill="#ce9178"/><rect x="34" y="16.4" width="1" height="1.4" fill="#b8a040"/><rect x="36" y="16.4" width="1" height="1.4" fill="#cccccc"/><rect x="38" y="16.4" width="3" height="1.4" fill="#ce9178"/><rect x="0" y="18.4" width="4" height="1.4" fill="#6a9955"/><rect x="5" y="18.4" width="16" height="1.4" fill="#6a9955"/><rect x="0" y="20.4" width="10" height="1.4" fill="#cccccc"/><rect x="11" y="20.4" width="1" height="1.4" fill="#cccccc"/><rect x="13" y="20.4" width="43" height="1.4" fill="#ce9178"/><rect x="0" y="22.4" width="9" height="1.4" fill="#cccccc"/><rect x="10" y="22.4" width="1" height="1.4" fill="#cccccc"/><rect x="12" y="22.4" width="29" height="1.4" fill="#cccccc"/><rect x="41" y="22.4" width="1" height="1.4" fill="#b8a040"/><rect x="42" y="22.4" width="10" height="1.4" fill="#cccccc"/><rect x="52" y="22.4" width="1" height="1.4" fill="#b8a040"/><rect x="0" y="24.4" width="19" height="1.4" fill="#cccccc"/><rect x="20" y="24.4" width="1" height="1.4" fill="#cccccc"/><rect x="22" y="24.4" width="19" height="1.4" fill="#cccccc"/><rect x="0" y="28.4" width="5" height="1.4" fill="#cccccc"/><rect x="6" y="28.4" width="1" height="1.4" fill="#cccccc"/><rect x="8" y="28.4" width="36" height="1.4" fill="#cccccc"/><rect x="44" y="28.4" width="1" height="1.4" fill="#b8a040"/><rect x="4" y="30.4" width="11" height="1.4" fill="#cccccc"/><rect x="4" y="32.4" width="5" height="1.4" fill="#9cdcfe"/><rect x="9" y="32.4" width="15" height="1.4" fill="#cccccc"/><rect x="4" y="34.4" width="10" height="1.4" fill="#9cdcfe"/><rect x="14" y="34.4" width="1" height="1.4" fill="#cccccc"/><rect x="15" y="34.4" width="6" height="1.4" fill="#ce9178"/><rect x="0" y="36.4" width="1" height="1.4" fill="#b8a040"/><rect x="0" y="40.4" width="4" height="1.4" fill="#6a9955"/><rect x="5" y="40.4" width="8" height="1.4" fill="#6a9955"/><rect x="0" y="42.4" width="11" height="1.4" fill="#cccccc"/><rect x="12" y="42.4" width="1" height="1.4" fill="#cccccc"/><rect x="14" y="42.4" width="10" height="1.4" fill="#cccccc"/><rect x="24" y="42.4" width="1" height="1.4" fill="#b8a040"/><rect x="4" y="44.4" width="1" height="1.4" fill="#9cdcfe"/><rect x="5" y="44.4" width="1" height="1.4" fill="#cccccc"/><rect x="6" y="44.4" width="2" height="1.4" fill="#b5cea8"/><rect x="8" y="44.4" width="1" height="1.4" fill="#cccccc"/><rect x="11" y="44.4" width="1" height="1.4" fill="#6a9955"/><rect x="13" y="44.4" width="24" height="1.4" fill="#6a9955"/><rect x="4" y="46.4" width="10" height="1.4" fill="#9cdcfe"/><rect x="14" y="46.4" width="1" height="1.4" fill="#cccccc"/><rect x="15" y="46.4" width="3" height="1.4" fill="#b5cea8"/><rect x="18" y="46.4" width="1" height="1.4" fill="#cccccc"/><rect x="21" y="46.4" width="1" height="1.4" fill="#6a9955"/><rect x="23" y="46.4" width="12" height="1.4" fill="#6a9955"/><rect x="4" y="48.4" width="14" height="1.4" fill="#9cdcfe"/><rect x="18" y="48.4" width="2" height="1.4" fill="#cccccc"/><rect x="20" y="48.4" width="8" height="1.4" fill="#ce9178"/><rect x="28" y="48.4" width="1" height="1.4" fill="#cccccc"/><rect x="30" y="48.4" width="8" height="1.4" fill="#ce9178"/><rect x="38" y="48.4" width="1" height="1.4" fill="#cccccc"/><rect x="40" y="48.4" width="8" height="1.4" fill="#ce9178"/><rect x="48" y="48.4" width="1" height="1.4" fill="#cccccc"/><rect x="50" y="48.4" width="8" height="1.4" fill="#ce9178"/><rect x="58" y="48.4" width="2" height="1.4" fill="#cccccc"/><rect x="4" y="50.4" width="12" height="1.4" fill="#9cdcfe"/><rect x="16" y="50.4" width="1" height="1.4" fill="#cccccc"/><rect x="17" y="50.4" width="3" height="1.4" fill="#b5cea8"/><rect x="20" y="50.4" width="1" height="1.4" fill="#cccccc"/><rect x="4" y="52.4" width="4" height="1.4" fill="#9cdcfe"/><rect x="8" y="52.4" width="1" height="1.4" fill="#cccccc"/><rect x="9" y="52.4" width="6" height="1.4" fill="#ce9178"/><rect x="15" y="52.4" width="1" height="1.4" fill="#cccccc"/><rect x="4" y="54.4" width="9" height="1.4" fill="#9cdcfe"/><rect x="13" y="54.4" width="1" height="1.4" fill="#cccccc"/><rect x="14" y="54.4" width="11" height="1.4" fill="#ce9178"/><rect x="0" y="56.4" width="1" height="1.4" fill="#b8a040"/><rect x="0" y="58.4" width="5" height="1.4" fill="#cccccc"/><rect x="6" y="58.4" width="1" height="1.4" fill="#cccccc"/><rect x="8" y="58.4" width="14" height="1.4" fill="#cccccc"/><rect x="22" y="58.4" width="1" height="1.4" fill="#b8a040"/><rect x="23" y="58.4" width="6" height="1.4" fill="#cccccc"/><rect x="30" y="58.4" width="11" height="1.4" fill="#cccccc"/><rect x="41" y="58.4" width="1" height="1.4" fill="#b8a040"/><rect x="0" y="60.4" width="32" height="1.4" fill="#cccccc"/><rect x="32" y="60.4" width="2" height="1.4" fill="#b8a040"/><rect x="0" y="64.4" width="4" height="1.4" fill="#6a9955"/><rect x="5" y="64.4" width="18" height="1.4" fill="#6a9955"/><rect x="0" y="66.4" width="7" height="1.4" fill="#cccccc"/><rect x="8" y="66.4" width="1" height="1.4" fill="#cccccc"/><rect x="10" y="66.4" width="12" height="1.4" fill="#cccccc"/><rect x="22" y="66.4" width="1" height="1.4" fill="#b8a040"/><rect x="23" y="66.4" width="6" height="1.4" fill="#ce9178"/><rect x="29" y="66.4" width="1" height="1.4" fill="#cccccc"/><rect x="31" y="66.4" width="10" height="1.4" fill="#9cdcfe"/><rect x="41" y="66.4" width="1" height="1.4" fill="#cccccc"/><rect x="42" y="66.4" width="15" height="1.4" fill="#ce9178"/><rect x="57" y="66.4" width="1" height="1.4" fill="#cccccc"/><rect x="59" y="66.4" width="5" height="1.4" fill="#9cdcfe"/><rect x="64" y="66.4" width="1" height="1.4" fill="#cccccc"/><rect x="65" y="66.4" width="7" height="1.4" fill="#ce9178"/><rect x="72" y="66.4" width="1" height="1.4" fill="#b8a040"/><rect x="0" y="68.4" width="7" height="1.4" fill="#cccccc"/><rect x="8" y="68.4" width="1" height="1.4" fill="#cccccc"/><rect x="10" y="68.4" width="24" height="1.4" fill="#cccccc"/><rect x="34" y="68.4" width="1" height="1.4" fill="#b8a040"/><rect x="35" y="68.4" width="9" height="1.4" fill="#9cdcfe"/><rect x="44" y="68.4" width="1" height="1.4" fill="#cccccc"/><rect x="45" y="68.4" width="3" height="1.4" fill="#b5cea8"/><rect x="48" y="68.4" width="1" height="1.4" fill="#cccccc"/><rect x="50" y="68.4" width="4" height="1.4" fill="#9cdcfe"/><rect x="54" y="68.4" width="1" height="1.4" fill="#cccccc"/><rect x="55" y="68.4" width="2" height="1.4" fill="#b5cea8"/><rect x="57" y="68.4" width="1" height="1.4" fill="#b8a040"/><rect x="0" y="72.4" width="3" height="1.4" fill="#569cd6"/><rect x="4" y="72.4" width="19" height="1.4" fill="#dcdcaa"/><rect x="23" y="72.4" width="1" height="1.4" fill="#b8a040"/><rect x="24" y="72.4" width="8" height="1.4" fill="#9cdcfe"/><rect x="32" y="72.4" width="1" height="1.4" fill="#b8a040"/><rect x="33" y="72.4" width="1" height="1.4" fill="#cccccc"/><rect x="4" y="74.4" width="5" height="1.4" fill="#cccccc"/><rect x="10" y="74.4" width="1" height="1.4" fill="#cccccc"/><rect x="12" y="74.4" width="2" height="1.4" fill="#cccccc"/><rect x="4" y="76.4" width="3" height="1.4" fill="#c586c0"/><rect x="8" y="76.4" width="12" height="1.4" fill="#cccccc"/><rect x="21" y="76.4" width="6" height="1.4" fill="#cccccc"/><rect x="28" y="76.4" width="2" height="1.4" fill="#c586c0"/><rect x="31" y="76.4" width="3" height="1.4" fill="#dcdcaa"/><rect x="34" y="76.4" width="1" height="1.4" fill="#b8a040"/><rect x="35" y="76.4" width="8" height="1.4" fill="#cccccc"/><rect x="43" y="76.4" width="1" height="1.4" fill="#cccccc"/><rect x="44" y="76.4" width="13" height="1.4" fill="#ce9178"/><rect x="57" y="76.4" width="2" height="1.4" fill="#cccccc"/><rect x="60" y="76.4" width="8" height="1.4" fill="#cccccc"/><rect x="68" y="76.4" width="1" height="1.4" fill="#cccccc"/><rect x="69" y="76.4" width="8" height="1.4" fill="#ce9178"/><rect x="77" y="76.4" width="3" height="1.4" fill="#cccccc"/><rect x="8" y="78.4" width="1" height="1.4" fill="#6a9955"/><rect x="10" y="78.4" width="20" height="1.4" fill="#6a9955"/><rect x="31" y="78.4" width="9" height="1.4" fill="#6a9955"/><rect x="8" y="80.4" width="4" height="1.4" fill="#cccccc"/><rect x="13" y="80.4" width="1" height="1.4" fill="#cccccc"/><rect x="15" y="80.4" width="1" height="1.4" fill="#569cd6"/><rect x="16" y="80.4" width="4" height="1.4" fill="#ce9178"/><rect x="21" y="80.4" width="12" height="1.4" fill="#ce9178"/><rect x="33" y="80.4" width="2" height="1.4" fill="#dcdcaa"/><rect x="35" y="80.4" width="13" height="1.4" fill="#9cdcfe"/><rect x="48" y="80.4" width="4" height="1.4" fill="#dcdcaa"/><rect x="52" y="80.4" width="3" height="1.4" fill="#ce9178"/><rect x="56" y="80.4" width="9" height="1.4" fill="#ce9178"/><rect x="65" y="80.4" width="2" height="1.4" fill="#dcdcaa"/><rect x="67" y="80.4" width="8" height="1.4" fill="#9cdcfe"/><rect x="75" y="80.4" width="1" height="1.4" fill="#569cd6"/><rect x="76" y="80.4" width="20" height="1.4" fill="#9cdcfe"/><rect x="96" y="80.4" width="1" height="1.4" fill="#569cd6"/><rect x="97" y="80.4" width="1" height="1.4" fill="#ce9178"/><rect x="8" y="82.4" width="5" height="1.4" fill="#cccccc"/><rect x="14" y="82.4" width="12" height="1.4" fill="#cccccc"/><rect x="4" y="84.4" width="9" height="1.4" fill="#cccccc"/><rect x="14" y="84.4" width="1" height="1.4" fill="#cccccc"/><rect x="16" y="84.4" width="10" height="1.4" fill="#cccccc"/><rect x="8" y="86.4" width="6" height="1.4" fill="#cccccc"/><rect x="8" y="88.4" width="10" height="1.4" fill="#9cdcfe"/><rect x="18" y="88.4" width="1" height="1.4" fill="#cccccc"/><rect x="19" y="88.4" width="4" height="1.4" fill="#569cd6"/><rect x="23" y="88.4" width="1" height="1.4" fill="#cccccc"/><rect x="8" y="90.4" width="7" height="1.4" fill="#9cdcfe"/><rect x="15" y="90.4" width="1" height="1.4" fill="#cccccc"/><rect x="16" y="90.4" width="12" height="1.4" fill="#ce9178"/><rect x="28" y="90.4" width="1" height="1.4" fill="#cccccc"/><rect x="8" y="92.4" width="10" height="1.4" fill="#9cdcfe"/><rect x="18" y="92.4" width="1" height="1.4" fill="#cccccc"/><rect x="19" y="92.4" width="3" height="1.4" fill="#b5cea8"/><rect x="22" y="92.4" width="1" height="1.4" fill="#cccccc"/><rect x="8" y="94.4" width="14" height="1.4" fill="#9cdcfe"/><rect x="22" y="94.4" width="1" height="1.4" fill="#cccccc"/><rect x="23" y="94.4" width="4" height="1.4" fill="#569cd6"/><rect x="27" y="94.4" width="1" height="1.4" fill="#cccccc"/><rect x="8" y="96.4" width="22" height="1.4" fill="#9cdcfe"/><rect x="30" y="96.4" width="1" height="1.4" fill="#cccccc"/><rect x="31" y="96.4" width="4" height="1.4" fill="#569cd6"/><rect x="4" y="98.4" width="1" height="1.4" fill="#b8a040"/><rect x="4" y="100.4" width="9" height="1.4" fill="#cccccc"/><rect x="13" y="100.4" width="1" height="1.4" fill="#b8a040"/><rect x="14" y="100.4" width="8" height="1.4" fill="#ce9178"/><rect x="22" y="100.4" width="1" height="1.4" fill="#b8a040"/><rect x="24" y="100.4" width="1" height="1.4" fill="#cccccc"/><rect x="26" y="100.4" width="9" height="1.4" fill="#cccccc"/><rect x="35" y="100.4" width="1" height="1.4" fill="#b8a040"/><rect x="36" y="100.4" width="11" height="1.4" fill="#ce9178"/><rect x="47" y="100.4" width="1" height="1.4" fill="#b8a040"/><rect x="48" y="100.4" width="7" height="1.4" fill="#cccccc"/><rect x="4" y="102.4" width="6" height="1.4" fill="#c586c0"/><rect x="11" y="102.4" width="9" height="1.4" fill="#cccccc"/><rect x="0" y="106.4" width="15" height="1.4" fill="#cccccc"/><rect x="16" y="106.4" width="1" height="1.4" fill="#cccccc"/><rect x="18" y="106.4" width="7" height="1.4" fill="#cccccc"/><rect x="25" y="106.4" width="1" height="1.4" fill="#b8a040"/><rect x="26" y="106.4" width="7" height="1.4" fill="#ce9178"/><rect x="33" y="106.4" width="1" height="1.4" fill="#b8a040"/><rect x="34" y="106.4" width="4" height="1.4" fill="#cccccc"/><rect x="38" y="106.4" width="1" height="1.4" fill="#b8a040"/><rect x="39" y="106.4" width="19" height="1.4" fill="#cccccc"/><rect x="58" y="106.4" width="1" height="1.4" fill="#cccccc"/><rect x="60" y="106.4" width="7" height="1.4" fill="#9cdcfe"/><rect x="67" y="106.4" width="1" height="1.4" fill="#cccccc"/><rect x="68" y="106.4" width="4" height="1.4" fill="#569cd6"/><rect x="72" y="106.4" width="1" height="1.4" fill="#b8a040"/><rect x="0" y="108.4" width="14" height="1.4" fill="#cccccc"/><rect x="15" y="108.4" width="1" height="1.4" fill="#cccccc"/><rect x="17" y="108.4" width="7" height="1.4" fill="#cccccc"/><rect x="24" y="108.4" width="1" height="1.4" fill="#b8a040"/><rect x="25" y="108.4" width="6" height="1.4" fill="#ce9178"/><rect x="31" y="108.4" width="1" height="1.4" fill="#b8a040"/><rect x="32" y="108.4" width="4" height="1.4" fill="#cccccc"/><rect x="36" y="108.4" width="1" height="1.4" fill="#b8a040"/><rect x="37" y="108.4" width="19" height="1.4" fill="#cccccc"/><rect x="56" y="108.4" width="1" height="1.4" fill="#cccccc"/><rect x="58" y="108.4" width="7" height="1.4" fill="#9cdcfe"/><rect x="65" y="108.4" width="1" height="1.4" fill="#cccccc"/><rect x="66" y="108.4" width="4" height="1.4" fill="#569cd6"/><rect x="70" y="108.4" width="1" height="1.4" fill="#b8a040"/><rect x="0" y="112.4" width="4" height="1.4" fill="#6a9955"/><rect x="5" y="112.4" width="14" height="1.4" fill="#6a9955"/><rect x="20" y="112.4" width="10" height="1.4" fill="#6a9955"/><rect x="31" y="112.4" width="18" height="1.4" fill="#6a9955"/><rect x="0" y="114.4" width="4" height="1.4" fill="#c586c0"/><rect x="5" y="114.4" width="12" height="1.4" fill="#cccccc"/><rect x="18" y="114.4" width="6" height="1.4" fill="#c586c0"/><rect x="25" y="114.4" width="19" height="1.4" fill="#cccccc"/><rect x="0" y="116.4" width="13" height="1.4" fill="#cccccc"/><rect x="14" y="116.4" width="1" height="1.4" fill="#cccccc"/><rect x="16" y="116.4" width="19" height="1.4" fill="#cccccc"/><rect x="0" y="120.4" width="4" height="1.4" fill="#6a9955"/><rect x="5" y="120.4" width="6" height="1.4" fill="#6a9955"/><rect x="0" y="122.4" width="13" height="1.4" fill="#cccccc"/><rect x="14" y="122.4" width="1" height="1.4" fill="#cccccc"/><rect x="16" y="122.4" width="17" height="1.4" fill="#cccccc"/><rect x="33" y="122.4" width="1" height="1.4" fill="#b8a040"/><rect x="4" y="124.4" width="10" height="1.4" fill="#9cdcfe"/><rect x="14" y="124.4" width="1" height="1.4" fill="#cccccc"/><rect x="15" y="124.4" width="12" height="1.4" fill="#ce9178"/><rect x="27" y="124.4" width="7" height="1.4" fill="#ce9178"/><rect x="34" y="124.4" width="1" height="1.4" fill="#cccccc"/><rect x="4" y="126.4" width="27" height="1.4" fill="#9cdcfe"/><rect x="31" y="126.4" width="1" height="1.4" fill="#cccccc"/><rect x="32" y="126.4" width="1" height="1.4" fill="#b5cea8"/><rect x="33" y="126.4" width="1" height="1.4" fill="#cccccc"/><rect x="4" y="128.4" width="26" height="1.4" fill="#9cdcfe"/><rect x="30" y="128.4" width="1" height="1.4" fill="#cccccc"/><rect x="31" y="128.4" width="1" height="1.4" fill="#b5cea8"/><rect x="32" y="128.4" width="1" height="1.4" fill="#cccccc"/><rect x="4" y="130.4" width="27" height="1.4" fill="#9cdcfe"/><rect x="31" y="130.4" width="1" height="1.4" fill="#cccccc"/><rect x="32" y="130.4" width="1" height="1.4" fill="#b5cea8"/><rect x="33" y="130.4" width="1" height="1.4" fill="#cccccc"/><rect x="4" y="132.4" width="13" height="1.4" fill="#9cdcfe"/><rect x="17" y="132.4" width="1" height="1.4" fill="#cccccc"/><rect x="18" y="132.4" width="4" height="1.4" fill="#b5cea8"/><rect x="22" y="132.4" width="1" height="1.4" fill="#cccccc"/><rect x="25" y="132.4" width="1" height="1.4" fill="#6a9955"/><rect x="27" y="132.4" width="4" height="1.4" fill="#6a9955"/><rect x="32" y="132.4" width="2" height="1.4" fill="#6a9955"/><rect x="4" y="134.4" width="16" height="1.4" fill="#9cdcfe"/><rect x="20" y="134.4" width="1" height="1.4" fill="#cccccc"/><rect x="21" y="134.4" width="1" height="1.4" fill="#b5cea8"/><rect x="22" y="134.4" width="1" height="1.4" fill="#cccccc"/><rect x="4" y="136.4" width="13" height="1.4" fill="#9cdcfe"/><rect x="17" y="136.4" width="1" height="1.4" fill="#cccccc"/><rect x="18" y="136.4" width="2" height="1.4" fill="#b5cea8"/><rect x="20" y="136.4" width="1" height="1.4" fill="#cccccc"/><rect x="4" y="138.4" width="10" height="1.4" fill="#9cdcfe"/><rect x="14" y="138.4" width="1" height="1.4" fill="#cccccc"/><rect x="15" y="138.4" width="3" height="1.4" fill="#b5cea8"/><rect x="18" y="138.4" width="1" height="1.4" fill="#cccccc"/><rect x="4" y="140.4" width="13" height="1.4" fill="#9cdcfe"/><rect x="17" y="140.4" width="1" height="1.4" fill="#cccccc"/><rect x="18" y="140.4" width="7" height="1.4" fill="#ce9178"/><rect x="25" y="140.4" width="1" height="1.4" fill="#cccccc"/><rect x="4" y="142.4" width="10" height="1.4" fill="#9cdcfe"/><rect x="14" y="142.4" width="1" height="1.4" fill="#cccccc"/><rect x="15" y="142.4" width="3" height="1.4" fill="#b5cea8"/><rect x="18" y="142.4" width="1" height="1.4" fill="#cccccc"/><rect x="4" y="144.4" width="16" height="1.4" fill="#9cdcfe"/><rect x="20" y="144.4" width="1" height="1.4" fill="#cccccc"/><rect x="21" y="144.4" width="1" height="1.4" fill="#b5cea8"/><rect x="22" y="144.4" width="1" height="1.4" fill="#cccccc"/><rect x="4" y="146.4" width="4" height="1.4" fill="#9cdcfe"/><rect x="8" y="146.4" width="1" height="1.4" fill="#cccccc"/><rect x="9" y="146.4" width="4" height="1.4" fill="#569cd6"/><rect x="13" y="146.4" width="1" height="1.4" fill="#cccccc"/><rect x="4" y="148.4" width="12" height="1.4" fill="#9cdcfe"/><rect x="16" y="148.4" width="1" height="1.4" fill="#cccccc"/><rect x="17" y="148.4" width="3" height="1.4" fill="#b5cea8"/><rect x="20" y="148.4" width="1" height="1.4" fill="#cccccc"/><rect x="22" y="148.4" width="1" height="1.4" fill="#6a9955"/><rect x="24" y="148.4" width="6" height="1.4" fill="#6a9955"/><rect x="31" y="148.4" width="8" height="1.4" fill="#6a9955"/><rect x="40" y="148.4" width="1" height="1.4" fill="#6a9955"/><rect x="42" y="148.4" width="17" height="1.4" fill="#6a9955"/><rect x="60" y="148.4" width="5" height="1.4" fill="#6a9955"/><rect x="4" y="150.4" width="9" height="1.4" fill="#9cdcfe"/><rect x="13" y="150.4" width="1" height="1.4" fill="#cccccc"/><rect x="14" y="150.4" width="6" height="1.4" fill="#ce9178"/><rect x="20" y="150.4" width="1" height="1.4" fill="#cccccc"/><rect x="4" y="152.4" width="4" height="1.4" fill="#9cdcfe"/><rect x="8" y="152.4" width="1" height="1.4" fill="#cccccc"/><rect x="9" y="152.4" width="4" height="1.4" fill="#569cd6"/><rect x="13" y="152.4" width="1" height="1.4" fill="#cccccc"/><rect x="4" y="154.4" width="22" height="1.4" fill="#9cdcfe"/><rect x="26" y="154.4" width="1" height="1.4" fill="#cccccc"/><rect x="27" y="154.4" width="4" height="1.4" fill="#569cd6"/><rect x="31" y="154.4" width="1" height="1.4" fill="#cccccc"/><rect x="4" y="156.4" width="12" height="1.4" fill="#9cdcfe"/><rect x="16" y="156.4" width="1" height="1.4" fill="#cccccc"/><rect x="18" y="156.4" width="1" height="1.4" fill="#6a9955"/><rect x="20" y="156.4" width="12" height="1.4" fill="#6a9955"/><rect x="0" y="158.4" width="1" height="1.4" fill="#b8a040"/><rect x="0" y="162.4" width="4" height="1.4" fill="#6a9955"/><rect x="5" y="162.4" width="3" height="1.4" fill="#6a9955"/><rect x="0" y="164.4" width="7" height="1.4" fill="#cccccc"/><rect x="8" y="164.4" width="1" height="1.4" fill="#cccccc"/><rect x="10" y="164.4" width="8" height="1.4" fill="#cccccc"/><rect x="4" y="166.4" width="5" height="1.4" fill="#9cdcfe"/><rect x="9" y="166.4" width="1" height="1.4" fill="#cccccc"/><rect x="10" y="166.4" width="5" height="1.4" fill="#cccccc"/><rect x="15" y="166.4" width="1" height="1.4" fill="#cccccc"/><rect x="4" y="168.4" width="4" height="1.4" fill="#9cdcfe"/><rect x="8" y="168.4" width="1" height="1.4" fill="#cccccc"/><rect x="9" y="168.4" width="13" height="1.4" fill="#cccccc"/><rect x="22" y="168.4" width="1" height="1.4" fill="#cccccc"/><rect x="4" y="170.4" width="13" height="1.4" fill="#9cdcfe"/><rect x="17" y="170.4" width="1" height="1.4" fill="#cccccc"/><rect x="18" y="170.4" width="15" height="1.4" fill="#cccccc"/><rect x="33" y="170.4" width="1" height="1.4" fill="#cccccc"/><rect x="4" y="172.4" width="12" height="1.4" fill="#9cdcfe"/><rect x="16" y="172.4" width="1" height="1.4" fill="#cccccc"/><rect x="17" y="172.4" width="14" height="1.4" fill="#cccccc"/><rect x="31" y="172.4" width="1" height="1.4" fill="#cccccc"/><rect x="4" y="174.4" width="13" height="1.4" fill="#9cdcfe"/><rect x="17" y="174.4" width="1" height="1.4" fill="#cccccc"/><rect x="18" y="174.4" width="13" height="1.4" fill="#cccccc"/><rect x="31" y="174.4" width="1" height="1.4" fill="#cccccc"/><rect x="4" y="176.4" width="9" height="1.4" fill="#9cdcfe"/><rect x="13" y="176.4" width="1" height="1.4" fill="#cccccc"/><rect x="14" y="176.4" width="9" height="1.4" fill="#cccccc"/><rect x="0" y="178.4" width="1" height="1.4" fill="#b8a040"/><rect x="0" y="182.4" width="13" height="1.4" fill="#cccccc"/><rect x="13" y="182.4" width="2" height="1.4" fill="#b8a040"/><rect x="0" y="186.4" width="4" height="1.4" fill="#6a9955"/><rect x="5" y="186.4" width="4" height="1.4" fill="#6a9955"/><rect x="0" y="188.4" width="29" height="1.4" fill="#cccccc"/><rect x="29" y="188.4" width="1" height="1.4" fill="#b8a040"/><rect x="30" y="188.4" width="27" height="1.4" fill="#ce9178"/><rect x="57" y="188.4" width="1" height="1.4" fill="#b8a040"/></g>
</svg>
<div class="abs" style="left:1456px;top:0;width:1px;height:767px;background:#161616"></div>
<div class="abs" style="left:1457px;top:1px;width:20px;height:3px;background:#8a8a8a"></div>
<div class="abs" style="left:1456px;top:35px;width:21px;height:173px;background:#444444"></div>
<div class="abs" style="left:102px;top:749px;width:1061px;height:18px;background:#434343"></div>
<div class="abs" style="left:0;top:0;width:1338px;height:7px;background:linear-gradient(to bottom,rgba(0,0,0,.6),rgba(0,0,0,0))"></div>
</div>
<div id="panel" class="abs">
<div class="ptab" style="left:29px;color:#cccccc;">终端</div>
<div class="ptab" style="left:98px;">端口</div>
<div class="ptab" style="left:167px;">问题</div>
<div class="ptab" style="left:236px;">输出</div>
<div class="ptab" style="left:305.5px;">调试控制台</div>
<div class="abs" style="left:27px;top:42px;width:39px;height:1px;background:#0078d4"></div>
<svg class="abs" style="left:1034px;top:0" width="440" height="52" viewBox="1480 906 440 52" fill="none" stroke="#cccccc" stroke-width="1.6" stroke-linejoin="round">
<path d="M1500.3 921V941.2M1490 931.1H1510.4"/><path d="M1519.4 929.7l5.6 5.6 5.6-5.6" stroke-width="1.5"/>
<rect x="1549.7" y="922.1" width="19.5" height="19.4" rx="2.3"/><path d="M1553.9 927.8l5 5-5 5M1560 937.3h6"/>
<g stroke="#cca700"><path d="M1674.2 922.8L1683.6 939.5H1664.8z"/><path d="M1674.2 928.8v5.5M1674.2 935.8v1.8" stroke-width="1.7"/></g>
<rect x="1704.5" y="923.4" width="18.5" height="18.5" rx="2.2"/><path d="M1713.7 923.4V941.9"/>
<path d="M1743 925H1761M1748.2 925V923.7a1.5 1.5 0 0 1 1.5-1.5h5a1.5 1.5 0 0 1 1.5 1.5V925M1745.5 925.3l.7 14.7a1.7 1.7 0 0 0 1.7 1.6h8.4a1.7 1.7 0 0 0 1.7-1.6l.7-14.7M1750 929v8.8M1754.3 929v8.8"/>
<circle cx="1783.4" cy="932" r="1.7" fill="#cccccc" stroke="none"/><circle cx="1791.1" cy="932" r="1.7" fill="#cccccc" stroke="none"/><circle cx="1798.7" cy="932" r="1.7" fill="#cccccc" stroke="none"/>
<path d="M1820.5 919V943" stroke="#5a5a5a" stroke-width="1"/>
<path d="M1841 928.6V922.9H1846.7M1852.3 922.9H1858V928.6M1858 933.6V939.3H1852.3M1846.7 939.3H1841V933.6" stroke-linejoin="miter"/>
<path d="M1882.8 925l12.2 12.2M1895 925l-12.2 12.2" stroke-width="1.5"/></svg>
<div class="abs" style="left:1132px;top:0;height:52px;line-height:54px;font-size:17px;color:#cca700;letter-spacing:-0.327px;white-space:nowrap">powershell</div>
<div class="abs" style="left:1456px;top:56px;width:21px;height:8px;border-left:1px solid #000;border-top:1px solid #000;background:#1b1b1b"></div>
</div>
<div id="aux" class="abs">
<div class="abs" style="left:30px;top:20px;width:2px;height:13px;background:#1c1c72;border-top:1px solid #9fc0e8;border-bottom:1px solid #9fc0e8"></div>
<div class="abs" style="left:27px;top:42px;width:6px;height:1.5px;background:#0078d4"></div>
</div>
</body>
</html>
